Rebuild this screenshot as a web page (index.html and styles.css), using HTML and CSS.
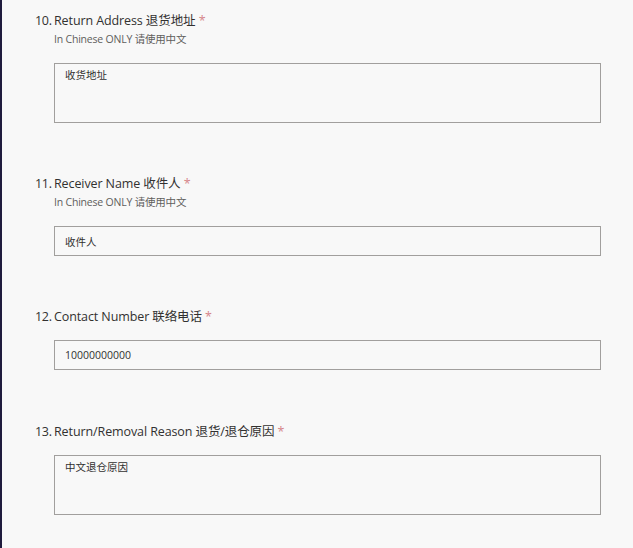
FILE: index.html
```html
<!DOCTYPE html>
<html lang="zh-CN">
<head>
    <meta charset="UTF-8">
    <meta name="viewport" content="width=device-width, initial-scale=1.0">
    <title>Return Form</title>
    <link rel="stylesheet" href="styles.css">
</head>
<body>
    <div class="form">
        <div class="question">
            <span class="q-num">10.</span>
            <div class="q-body">
                <div class="q-title">Return Address 退货地址 <span class="req">*</span></div>
                <div class="q-sub">In Chinese ONLY 请使用中文</div>
                <textarea class="field field-area">收货地址</textarea>
            </div>
        </div>

        <div class="question">
            <span class="q-num">11.</span>
            <div class="q-body">
                <div class="q-title">Receiver Name 收件人 <span class="req">*</span></div>
                <div class="q-sub">In Chinese ONLY 请使用中文</div>
                <input class="field" type="text" value="收件人">
            </div>
        </div>

        <div class="question">
            <span class="q-num">12.</span>
            <div class="q-body">
                <div class="q-title">Contact Number 联络电话 <span class="req">*</span></div>
                <input class="field" type="text" value="10000000000">
            </div>
        </div>

        <div class="question">
            <span class="q-num">13.</span>
            <div class="q-body">
                <div class="q-title">Return/Removal Reason 退货/退仓原因 <span class="req">*</span></div>
                <textarea class="field field-area">中文退仓原因</textarea>
            </div>
        </div>
    </div>
</body>
</html>
```

FILE: styles.css
```css
* {
    margin: 0;
    padding: 0;
    box-sizing: border-box;
}

body {
    background: #f8f8f8;
    border-left: 2px solid #1f1b3d;
    min-height: 100vh;
    font-family: 'Open Sans', 'Noto Sans CJK SC', sans-serif;
    color: #323130;
}

.form {
    padding: 10px 32px 0 33px;
}

.question {
    display: flex;
    margin-bottom: 50px;
}

.question:nth-child(3) {
    margin-bottom: 51px;
}

.q-num {
    width: 19px;
    padding-top: 2px;
    font-size: 12.5px;
    line-height: 18px;
    letter-spacing: -0.3px;
}

.q-body {
    flex: 1;
    display: flex;
    flex-direction: column;
}

.q-title {
    padding-top: 2px;
    font-size: 12.5px;
    line-height: 18px;
    letter-spacing: -0.1px;
}

.req {
    color: #d6858a;
}

.q-sub {
    font-size: 10.5px;
    line-height: 19px;
    color: #605e5c;
    letter-spacing: -0.2px;
}

.field {
    display: block;
    margin-top: 14px;
    width: 547px;
    height: 30px;
    padding: 0 10px;
    border: 1px solid #a19f9d;
    background: #f8f8f8;
    font-family: 'Open Sans', 'Noto Sans CJK SC', sans-serif;
    font-size: 10.5px;
    color: #323130;
    outline: none;
}

.field-area {
    height: 60px;
    padding: 3px 10px;
    resize: none;
    line-height: 16px;
}
```
